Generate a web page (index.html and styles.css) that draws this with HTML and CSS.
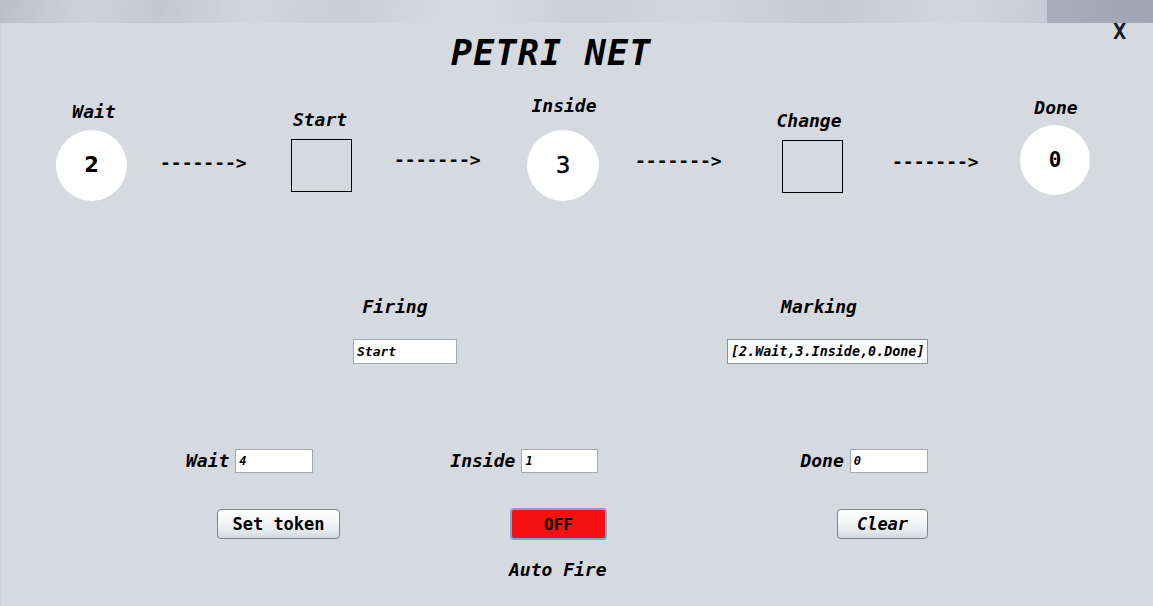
FILE: index.html
```html
<!DOCTYPE html>
<html>
<head>
<meta charset="utf-8">
<title>Petri Net</title>
<link rel="stylesheet" href="styles.css">
</head>
<body>
<div class="topstrip"><div class="strip-right"></div></div>
<div class="close">X</div>
<main class="panel">
  <h1 class="title">PETRI NET</h1>
  <section class="net">
    <div class="label lbl-wait">Wait</div>
    <div class="place place-wait"><span class="tok tok-bold">2</span></div>
    <div class="arrow arr1">-------&gt;</div>
    <div class="label lbl-start">Start</div>
    <div class="trans trans-start"></div>
    <div class="arrow arr2">-------&gt;</div>
    <div class="label lbl-inside">Inside</div>
    <div class="place place-inside"><span class="tok tok-plain">3</span></div>
    <div class="arrow arr3">-------&gt;</div>
    <div class="label lbl-change">Change</div>
    <div class="trans trans-change"></div>
    <div class="arrow arr4">-------&gt;</div>
    <div class="label lbl-done">Done</div>
    <div class="place place-done"><span class="tok tok-mono">0</span></div>
  </section>
  <section class="form">
    <div class="row row-heads">
      <div class="head head-firing">Firing</div>
      <div class="head head-marking">Marking</div>
    </div>
    <div class="row row-out">
      <input class="field field-firing" type="text" value="Start">
      <input class="field field-marking" type="text" value="[2.Wait,3.Inside,0.Done]">
    </div>
    <div class="row row-tokens">
      <div class="grp grp-wait"><span class="glabel">Wait</span><input class="tin tin-wait" type="text" value="4"></div>
      <div class="grp grp-inside"><span class="glabel">Inside</span><input class="tin tin-inside" type="text" value="1"></div>
      <div class="grp grp-done"><span class="glabel">Done</span><input class="tin tin-done" type="text" value="0"></div>
    </div>
    <div class="row row-buttons">
      <button class="btn btn-set">Set token</button>
      <button class="btn-off">OFF</button>
      <button class="btn btn-clear">Clear</button>
    </div>
    <div class="row row-auto">
      <div class="auto">Auto Fire</div>
    </div>
  </section>
</main>
</body>
</html>
```
FILE: styles.css
```css
* { box-sizing: border-box; }
html, body {
  margin: 0;
  padding: 0;
}
body {
  width: 1153px;
  height: 606px;
  overflow: hidden;
  position: relative;
  font-family: "DejaVu Sans Mono", monospace;
  background: #d6d9e0;
  color: #000;
}
.topstrip {
  height: 23px;
  display: flex;
  justify-content: flex-end;
  background:
    linear-gradient(100deg, rgba(255,255,255,0) 0%, rgba(255,255,255,0.25) 8%, rgba(255,255,255,0) 14%, rgba(255,255,255,0.2) 22%, rgba(255,255,255,0) 30%, rgba(255,255,255,0.25) 40%, rgba(255,255,255,0) 50%, rgba(255,255,255,0.2) 60%, rgba(255,255,255,0) 72%, rgba(255,255,255,0.2) 82%, rgba(255,255,255,0) 90%),
    linear-gradient(90deg, #b9c0ca 0%, #c6ccd5 20%, #cbd2dc 45%, #c3cad4 70%, #c8ced8 88%, #bfc5cf 100%);
}
.strip-right {
  width: 106px;
  height: 23px;
  background: linear-gradient(90deg, #a8aeb9 0%, #a3a9b4 60%, #9fa5b1 100%);
}
.close {
  position: absolute;
  top: 20px;
  left: 1113px;
  font-size: 22px;
  font-weight: bold;
  line-height: 24px;
  color: #161b26;
}
.panel {
  height: 583px;
  background: #d6d9e0;
  border-left: 2px solid #cdd1d9;
}
.title {
  margin: 0;
  padding: 10px 0 0 449px;
  font-size: 35px;
  line-height: 40px;
  font-weight: bold;
  font-style: italic;
  letter-spacing: 1.2px;
  white-space: nowrap;
}
.net {
  position: relative;
  margin-top: 17px;
  height: 140px;
}
.label, .arrow {
  position: absolute;
  font-size: 18px;
  line-height: 20px;
  font-weight: bold;
  white-space: nowrap;
}
.label {
  width: 120px;
  text-align: center;
  font-style: italic;
}
.lbl-wait { left: 32px; top: 12px; }
.lbl-start { left: 258px; top: 20px; }
.lbl-inside { left: 502px; top: 6px; }
.lbl-change { left: 747px; top: 21px; }
.lbl-done { left: 994px; top: 8px; }

.arr1 { left: 158px; top: 63px; }
.arr2 { left: 392px; top: 60px; }
.arr3 { left: 633px; top: 61px; }
.arr4 { left: 890px; top: 62px; }

.place {
  position: absolute;
  background: #fff;
  border-radius: 50%;
  display: flex;
  align-items: center;
  justify-content: center;
}
.place-wait { left: 54px; top: 40px; width: 71px; height: 71px; }
.place-inside { left: 525px; top: 40px; width: 72px; height: 71px; }
.place-done { left: 1018px; top: 35px; width: 70px; height: 70px; }

.tok { line-height: 1; }
.tok-bold { font-family: "DejaVu Sans", sans-serif; font-weight: bold; font-size: 21px; }
.tok-plain { font-family: "DejaVu Sans", sans-serif; font-weight: normal; font-size: 23px; -webkit-text-stroke: 0.4px #000; }
.tok-mono { font-family: "DejaVu Sans Mono", monospace; font-weight: bold; font-size: 21px; }

.trans {
  position: absolute;
  width: 61px;
  height: 53px;
  border: 1px solid #000;
}
.trans-start { left: 289px; top: 49px; }
.trans-change { left: 780px; top: 50px; }

.row {
  display: flex;
  align-items: center;
}
.row-heads { margin-top: 67px; height: 20px; }
.head {
  width: 120px;
  text-align: center;
  font-size: 18px;
  line-height: 20px;
  font-weight: bold;
  font-style: italic;
}
.head-firing { margin-left: 333px; }
.head-marking { margin-left: 304px; }

.row-out { margin-top: 22px; height: 25px; }
.field, .tin {
  margin: 0;
  height: 25px;
  padding: 0 0 0 3px;
  background: #fff;
  border: 1px solid #a4a8af;
  border-radius: 0;
  font-family: "DejaVu Sans Mono", monospace;
  font-weight: bold;
  font-style: italic;
  font-size: 13px;
  color: #000;
  outline: none;
}
.field-firing { margin-left: 351px; width: 104px; }
.field-marking { margin-left: 270px; width: 201px; border-color: #8e9297; font-size: 13.4px; }

.row-tokens { margin-top: 85px; height: 24px; }
.grp { display: flex; align-items: center; gap: 6px; }
.glabel {
  font-size: 18px;
  line-height: 20px;
  font-weight: bold;
  font-style: italic;
}
.tin { height: 24px; font-size: 12px; }
.grp-wait { margin-left: 184px; }
.tin-wait { width: 78px; }
.grp-inside { margin-left: 137px; }
.tin-inside { width: 77px; }
.grp-done { margin-left: 202px; }
.tin-done { width: 78px; }

.row-buttons { margin-top: 35px; height: 32px; align-items: flex-start; }
.btn {
  margin-top: 1px;
  height: 30px;
  padding: 0;
  border: 1px solid #7d848e;
  border-radius: 4px;
  background: linear-gradient(180deg, #ffffff 0%, #f4f5f7 45%, #e2e5ea 80%, #d3d7de 100%);
  font-family: "DejaVu Sans Mono", monospace;
  font-weight: bold;
  font-size: 17px;
  color: #000;
}
.btn-set { margin-left: 215px; width: 123px; }
.btn-clear { margin-left: 230px; width: 91px; font-style: italic; }
.btn-off {
  margin-left: 170px;
  width: 97px;
  height: 32px;
  padding: 0;
  border: 2px solid #7fa3cf;
  border-radius: 4px;
  background: #f51111;
  font-family: "DejaVu Sans Mono", monospace;
  font-weight: bold;
  font-size: 16px;
  color: #000;
}

.row-auto { margin-top: 20px; height: 20px; }
.auto {
  margin-left: 507px;
  font-size: 18px;
  line-height: 20px;
  font-weight: bold;
  font-style: italic;
  white-space: nowrap;
}
```
